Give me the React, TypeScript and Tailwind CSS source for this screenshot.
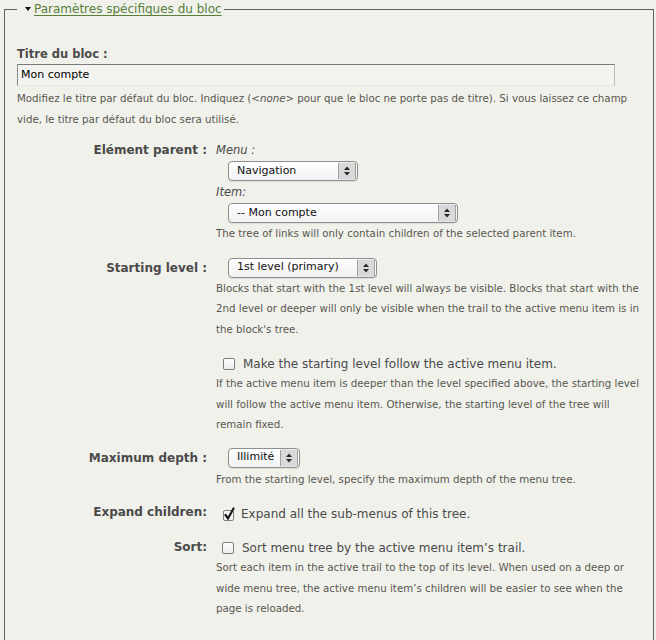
import React from 'react';

const font = { fontFamily: '"DejaVu Sans", Verdana, sans-serif' };

function Stepper() {
  return (
    <svg width="18" height="18" viewBox="0 0 18 18" className="shrink-0">
      <rect x="0.5" y="0.5" width="17" height="17" fill="#d9d9d9" />
      <line x1="0.5" y1="1" x2="0.5" y2="17" stroke="#a0a0a0" />
      <line x1="17.5" y1="1" x2="17.5" y2="17" stroke="#a0a0a0" />
      <path d="M6 8 L9 4.5 L12 8 Z" fill="#2a2a2a" />
      <path d="M6 10 L9 13.5 L12 10 Z" fill="#2a2a2a" />
    </svg>
  );
}

function Select({ value, width }: { value: string; width: string }) {
  return (
    <div
      className={`flex h-[20px] items-center rounded-[4px] border border-[#8f8f8f] bg-gradient-to-b from-white to-[#f1f1f1] pr-[1px] shadow-[0_1px_1px_rgba(0,0,0,0.08)] ${width}`}
    >
      <span className="flex-1 truncate pl-[8px] text-[11px] text-[#111]">{value}</span>
      <Stepper />
    </div>
  );
}

function Checkbox({ checked }: { checked?: boolean }) {
  if (checked) {
    return (
      <svg width="14" height="15" viewBox="0 0 14 15" className="shrink-0">
        <rect x="1.5" y="3.5" width="10" height="10" rx="1.5" fill="#f7f7f7" stroke="#7d7d7d" />
        <path d="M3.5 8 L6 11.5 L11.5 1.5" fill="none" stroke="#1b1b1b" strokeWidth="2.2" strokeLinecap="round" />
      </svg>
    );
  }
  return (
    <span className="block h-[12px] w-[12px] shrink-0 rounded-[2px] border border-[#7d7d7d] bg-gradient-to-b from-white to-[#ececec]" />
  );
}

const Help = ({ children }: { children: React.ReactNode }) => (
  <p className="text-[10.25px] leading-[20.5px] text-[#57574f]">{children}</p>
);

const Label = ({ children }: { children: React.ReactNode }) => (
  <div className="text-right text-[12px] font-bold leading-[16px] text-[#4a4a4a]">{children}</div>
);

export default function App() {
  return (
    <div className="min-h-[640px] overflow-hidden bg-[#f1f1ec] pt-[2px]" style={font}>
      <fieldset className="ml-[4px] mr-[2px] border border-[#5b5f56] pb-[60px] pl-[12px] pr-[8px] pt-[30px]">
        <legend className="flex items-center gap-[3px] pl-[8px] pr-[2px] text-[12px] leading-[14px]">
          <svg width="6" height="4" viewBox="0 0 6 4">
            <path d="M0 0 H6 L3 4 Z" fill="#111" />
          </svg>
          <span className="text-[#58803a] underline underline-offset-[2px]">Paramètres spécifiques du bloc</span>
        </legend>

        <div className="text-[11.5px] font-bold leading-[16px] text-[#4a4a4a]">Titre du bloc :</div>
        <div className="mt-[2px] flex h-[22px] w-[598px] items-center border border-b-[#e4e4e0] border-l-[#8a8a8a] border-r-[#b9b9b9] border-t-[#7a7a7a] bg-[#f3f3ef] pl-[3px] text-[11px] text-black">
          Mon compte
        </div>
        <div className="mt-[2px]">
          <Help>
            Modifiez le titre par défaut du bloc. Indiquez (<em>&lt;none&gt;</em> pour que le bloc ne porte pas de titre). Si vous laissez ce champ vide, le titre par défaut du bloc sera utilisé.
          </Help>
        </div>

        <div className="mt-[13px] grid grid-cols-[190px_1fr] gap-x-[9px]">
          <Label>Elément parent :</Label>
          <div>
            <div className="text-[11.5px] italic leading-[16px] text-[#4a4a4a]">Menu :</div>
            <div className="ml-[12px] mt-[3px]">
              <Select value="Navigation" width="w-[130px]" />
            </div>
            <div className="mt-[3px] text-[11.5px] italic leading-[16px] text-[#4a4a4a]">Item:</div>
            <div className="ml-[12px] mt-[3px]">
              <Select value="-- Mon compte" width="w-[230px]" />
            </div>
            <Help>The tree of links will only contain children of the selected parent item.</Help>
          </div>
        </div>

        <div className="mt-[14px] grid grid-cols-[190px_1fr] gap-x-[9px]">
          <div className="flex h-[20px] items-center justify-end">
            <Label>Starting level :</Label>
          </div>
          <div>
            <div className="ml-[12px]">
              <Select value="1st level (primary)" width="w-[149px]" />
            </div>
            <Help>
              Blocks that start with the 1st level will always be visible. Blocks that start with the 2nd level or deeper will only be visible when the trail to the active menu item is in the block's tree.
            </Help>
            <label className="mt-[16px] flex items-center gap-[8px] pl-[7px] text-[12px] leading-[18px] text-[#4a4a4a]">
              <Checkbox />
              Make the starting level follow the active menu item.
            </label>
            <Help>
              If the active menu item is deeper than the level specified above, the starting level will follow the active menu item. Otherwise, the starting level of the tree will remain fixed.
            </Help>
          </div>
        </div>

        <div className="mt-[13px] grid grid-cols-[190px_1fr] gap-x-[9px]">
          <div className="flex h-[20px] items-center justify-end">
            <Label>Maximum depth :</Label>
          </div>
          <div>
            <div className="ml-[12px]">
              <Select value="Illimité" width="w-[72px]" />
            </div>
            <div className="mt-[1px]">
              <Help>From the starting level, specify the maximum depth of the menu tree.</Help>
            </div>
          </div>
        </div>

        <div className="mt-[15px] grid grid-cols-[190px_1fr] gap-x-[9px]">
          <Label>Expand children:</Label>
          <label className="flex items-end gap-[5px] pl-[6px] text-[12px] leading-[18px] text-[#4a4a4a]">
            <Checkbox checked />
            <span className="translate-y-[1px]">Expand all the sub-menus of this tree.</span>
          </label>
        </div>

        <div className="mt-[17px] grid grid-cols-[190px_1fr] gap-x-[9px]">
          <Label>Sort:</Label>
          <div>
            <label className="flex items-center gap-[8px] pl-[6px] text-[12px] leading-[18px] text-[#4a4a4a]">
              <Checkbox />
              Sort menu tree by the active menu item’s trail.
            </label>
            <Help>
              Sort each item in the active trail to the top of its level. When used on a deep or wide menu tree, the active menu item’s children will be easier to see when the page is reloaded.
            </Help>
          </div>
        </div>
      </fieldset>
    </div>
  );
}
